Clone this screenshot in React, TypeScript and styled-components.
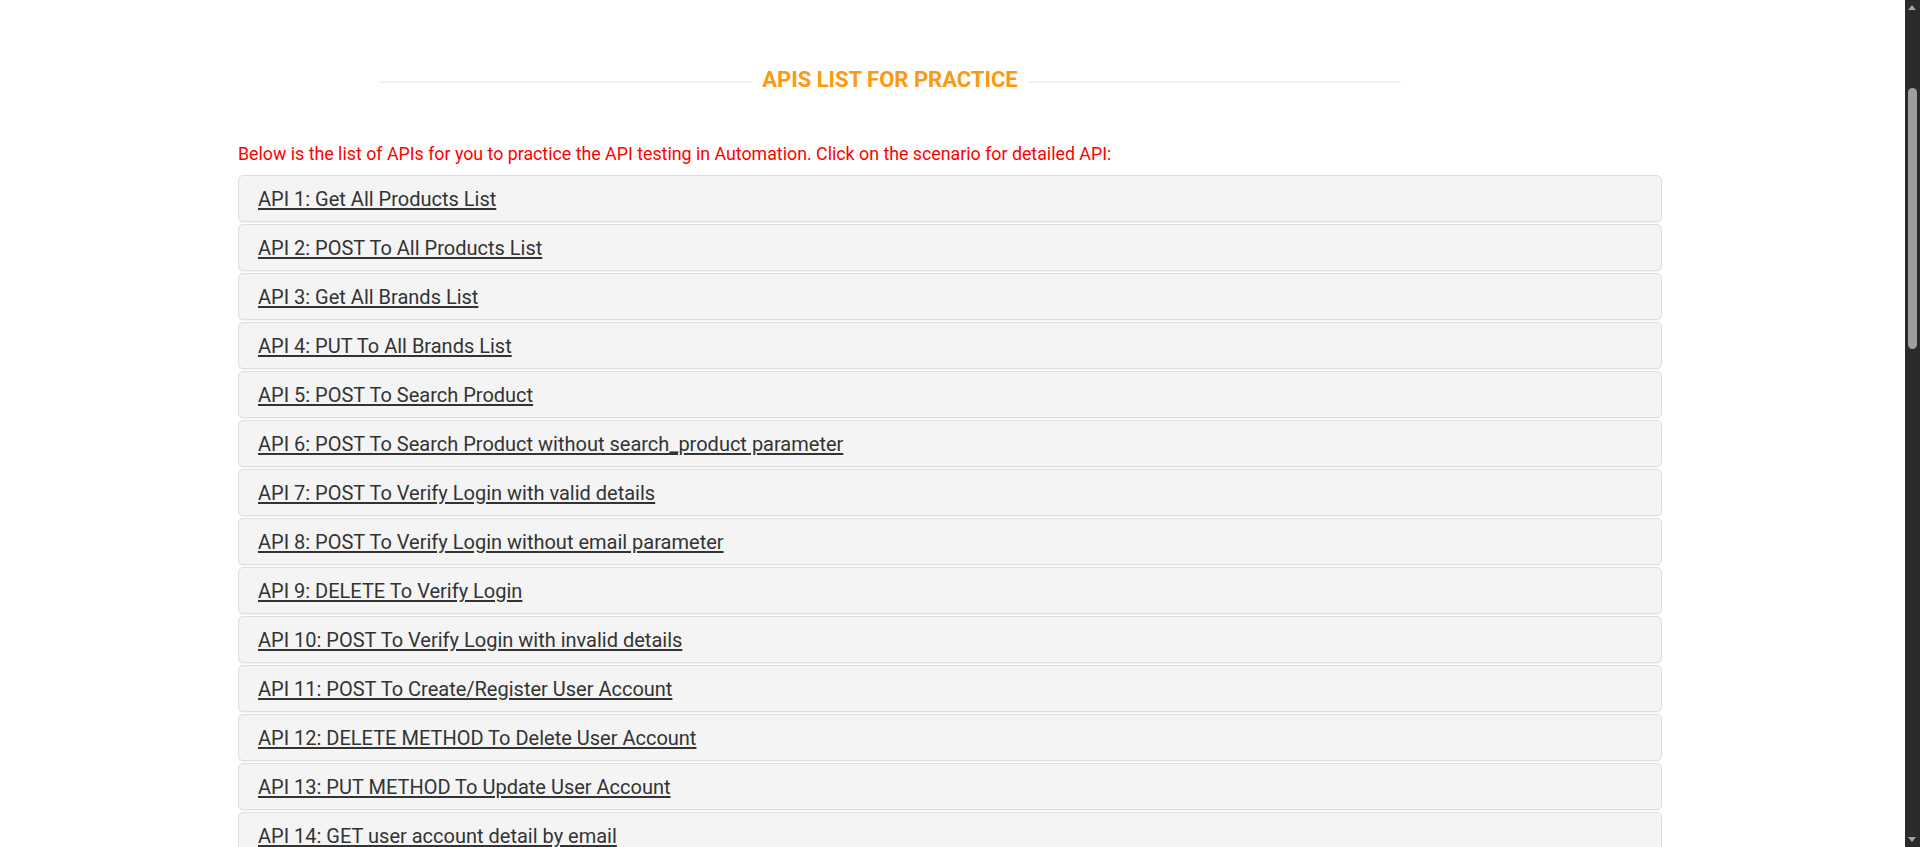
import React from "react";
import styled, { createGlobalStyle } from "styled-components";

const GlobalStyle = createGlobalStyle`
  html {
    background: #ffffff;
    scrollbar-width: none;
  }
  html::-webkit-scrollbar {
    display: none;
  }
  body {
    margin: 0;
    background: #ffffff;
    font-family: Roboto, "Noto Sans", sans-serif;
    color: #333333;
  }
`;

const Page = styled.section`
  padding: 67px 0 1860px 238px;
`;

const Container = styled.div`
  width: 1424px;
  display: flex;
  flex-direction: column;
`;

const TitleRow = styled.div`
  width: 1022px;
  margin-left: 141px;
  display: flex;
  align-items: center;
  gap: 10px;
`;

const TitleLine = styled.span`
  flex: 1;
  height: 2px;
  margin-top: 4px;
  background: #f2f2f2;
`;

const Title = styled.h2`
  margin: 0;
  font-family: Roboto, sans-serif;
  font-size: 22px;
  font-weight: 700;
  line-height: 26px;
  color: #fe980f;
  text-transform: uppercase;
`;

const Intro = styled.p`
  margin: 50px 0 11px;
  font-size: 17.8px;
  line-height: 21px;
  color: #ff0000;
`;

const List = styled.div`
  display: flex;
  flex-direction: column;
  gap: 2px;
`;

const Panel = styled.div`
  box-sizing: border-box;
  height: 47px;
  display: flex;
  align-items: center;
  padding: 0 19px;
  background: #f4f4f4;
  border: 1px solid #dedede;
  border-radius: 5px;
  box-shadow: 0 1px 1px rgba(0, 0, 0, 0.05);
`;

const PanelLink = styled.a`
  font-size: 20px;
  color: #333333;
  text-decoration: underline;
  text-underline-offset: 2px;
  cursor: pointer;
`;

/* Browser scrollbar as it appears in the screenshot (overlays the page edge) */
const ScrollTrack = styled.div`
  position: fixed;
  top: 0;
  right: 0;
  bottom: 0;
  width: 15px;
  background: #2b2b2b;
`;

const ScrollThumb = styled.div`
  position: absolute;
  top: 88px;
  left: 3px;
  width: 9px;
  height: 261px;
  border-radius: 5px;
  background: #9e9e9e;
`;

const ScrollArrow = styled.div<{ $down?: boolean }>`
  position: absolute;
  left: 3px;
  width: 0;
  height: 0;
  border-left: 4.5px solid transparent;
  border-right: 4.5px solid transparent;
  ${(p) =>
    p.$down
      ? "bottom: 5px; border-top: 5px solid #a3a3a3;"
      : "top: 5px; border-bottom: 5px solid #a3a3a3;"}
`;

const apis = [
  "API 1: Get All Products List",
  "API 2: POST To All Products List",
  "API 3: Get All Brands List",
  "API 4: PUT To All Brands List",
  "API 5: POST To Search Product",
  "API 6: POST To Search Product without search_product parameter",
  "API 7: POST To Verify Login with valid details",
  "API 8: POST To Verify Login without email parameter",
  "API 9: DELETE To Verify Login",
  "API 10: POST To Verify Login with invalid details",
  "API 11: POST To Create/Register User Account",
  "API 12: DELETE METHOD To Delete User Account",
  "API 13: PUT METHOD To Update User Account",
  "API 14: GET user account detail by email",
];

export default function App() {
  return (
    <>
      <GlobalStyle />
      <Page>
        <Container>
          <TitleRow>
            <TitleLine />
            <Title>APIs List for practice</Title>
            <TitleLine />
          </TitleRow>
          <Intro>
            Below is the list of APIs for you to practice the API testing in
            Automation. Click on the scenario for detailed API:
          </Intro>
          <List>
            {apis.map((a) => (
              <Panel key={a}>
                <PanelLink>{a}</PanelLink>
              </Panel>
            ))}
          </List>
        </Container>
      </Page>
      <ScrollTrack>
        <ScrollArrow />
        <ScrollThumb />
        <ScrollArrow $down />
      </ScrollTrack>
    </>
  );
}
